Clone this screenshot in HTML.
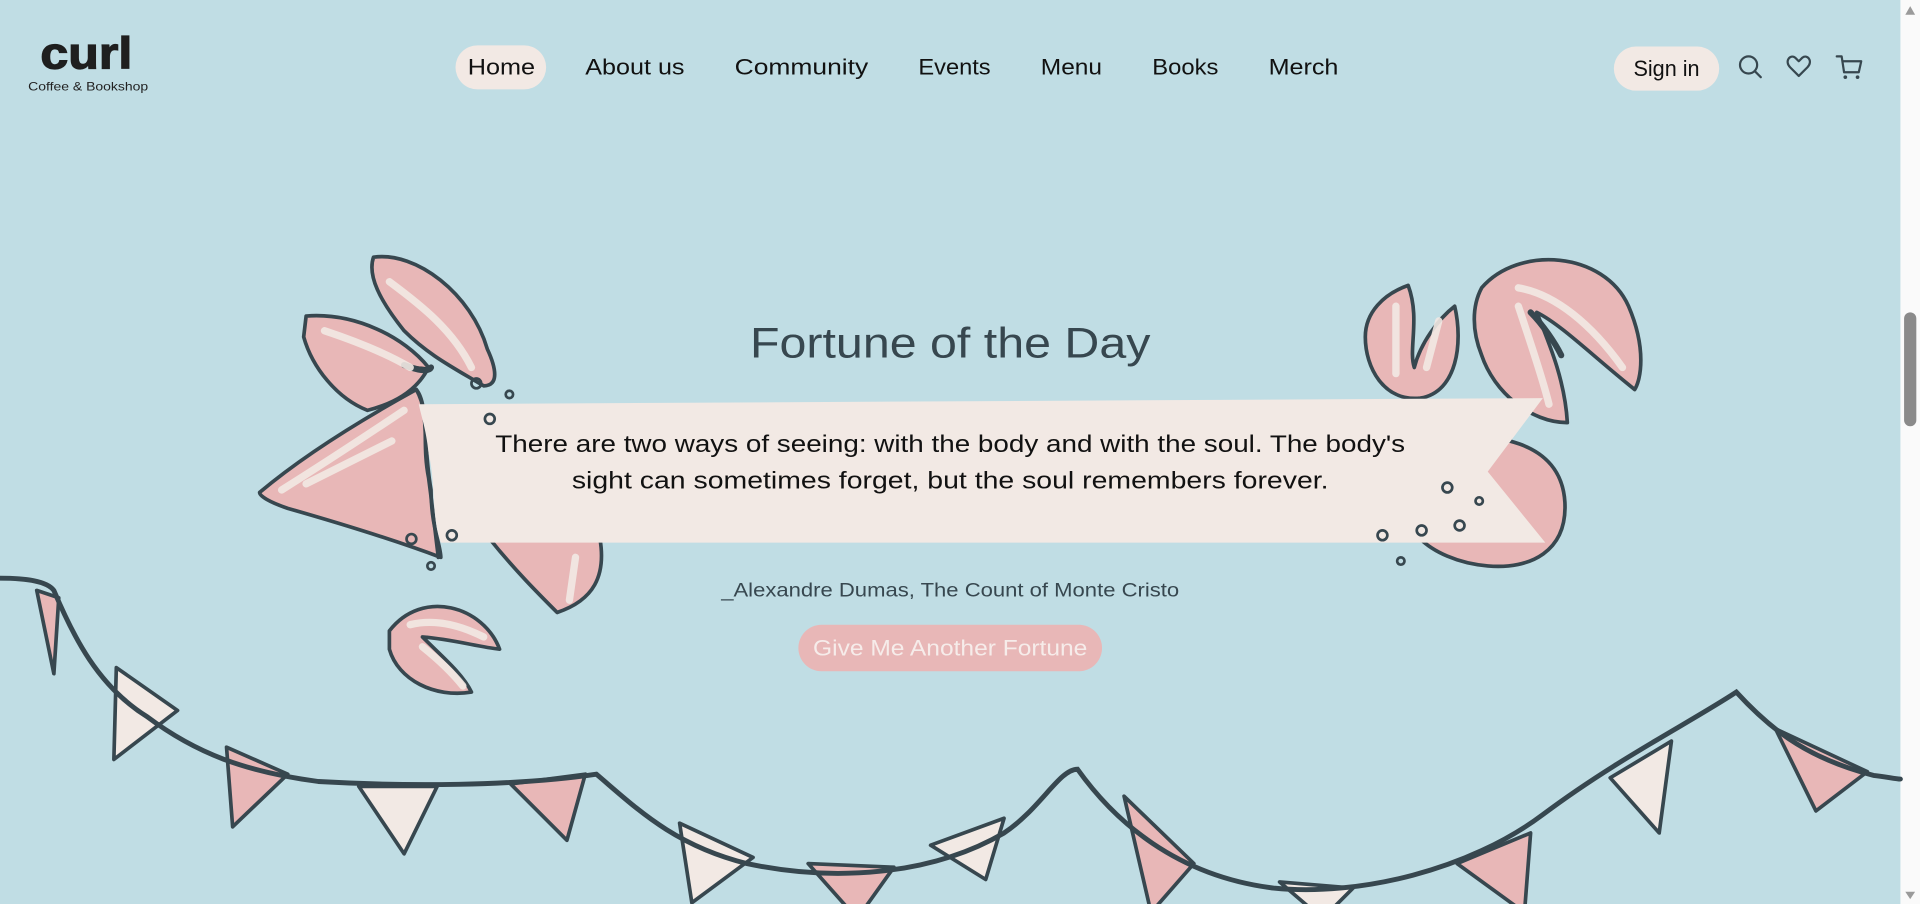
<!DOCTYPE html>
<html><head><meta charset="utf-8"><style>
html,body{margin:0;padding:0;width:1920px;height:904px;overflow:hidden;background:#c0dde4}
svg{display:block}
text{font-family:"Liberation Sans",sans-serif}
</style></head><body>
<svg width="1920" height="904" viewBox="0 0 1568 738" preserveAspectRatio="none">
<rect width="1568" height="738" fill="#c0dde4"/>
<rect x="1552" y="0" width="16" height="738" fill="#fafafa"/>
<rect x="1555" y="255" width="10" height="93" rx="5" fill="#8a8a8a"/>
<path d="M1556 12 L1560 5 L1564 12Z" fill="#9a9a9a"/>
<path d="M1556 728 L1560 734 L1564 728Z" fill="#9a9a9a"/>

<text x="33" y="56" font-size="36" font-weight="bold" fill="#1f1f1f" stroke="#1f1f1f" stroke-width="1" textLength="75" lengthAdjust="spacingAndGlyphs">curl</text>
<text x="23" y="74" font-size="10" fill="#222" textLength="98" lengthAdjust="spacingAndGlyphs">Coffee &amp; Bookshop</text>

<rect x="372" y="37" width="74" height="36" rx="18" fill="#f2e9e4"/>
<g font-size="18" fill="#111">
<text x="382" y="61" textLength="55" lengthAdjust="spacingAndGlyphs">Home</text>
<text x="478" y="61" textLength="81" lengthAdjust="spacingAndGlyphs">About us</text>
<text x="600" y="61" textLength="109" lengthAdjust="spacingAndGlyphs">Community</text>
<text x="750" y="61" textLength="59" lengthAdjust="spacingAndGlyphs">Events</text>
<text x="850" y="61" textLength="50" lengthAdjust="spacingAndGlyphs">Menu</text>
<text x="941" y="61" textLength="54" lengthAdjust="spacingAndGlyphs">Books</text>
<text x="1036" y="61" textLength="57" lengthAdjust="spacingAndGlyphs">Merch</text>
</g>
<rect x="1318" y="38" width="86" height="36" rx="18" fill="#f2e9e4"/>
<text x="1334" y="62" font-size="18" fill="#111" textLength="54" lengthAdjust="spacingAndGlyphs">Sign in</text>
<g fill="none" stroke="#37474f" stroke-width="1.8" stroke-linecap="round" stroke-linejoin="round">
<circle cx="1428" cy="53" r="7"/><path d="M1433 58 L1438 63"/>
<path d="M1469 62 L1462 55 C1457 50 1462 44 1466 47 L1469 50 L1472 47 C1476 44 1481 50 1476 55 Z"/>
<path d="M1500 46 L1504 46 L1506 59 L1518 59 L1520 50 L1505 50"/>
</g>
<circle cx="1507" cy="63" r="1.5" fill="#37474f"/><circle cx="1517" cy="63" r="1.5" fill="#37474f"/>

<g stroke="#37474f" stroke-width="3" stroke-linejoin="round" stroke-linecap="round">
<path d="M305 210 C340 205 385 240 398 285 C405 300 408 315 395 315 C370 300 350 290 330 270 C310 245 300 225 305 210Z" fill="#e8b7b7"/>
<path d="M250 258 C290 255 330 275 350 300 C340 320 320 330 300 335 C275 325 255 300 248 275Z" fill="#e8b7b7"/>
<path d="M330 298 C340 302 350 304 352 300" stroke-width="5"/>
<path d="M400 440 L490 440 C495 470 485 490 455 500 C440 485 420 465 400 440Z" fill="#e8b7b7"/>
<path d="M212 402 C250 370 300 340 340 318 C350 330 345 360 352 400 C352 430 360 445 360 455 C320 440 270 425 235 415 C220 410 212 405 212 402Z" fill="#e8b7b7"/>
<path d="M340 318 C352 340 344 360 350 390 C354 420 356 440 358 455" fill="none" stroke-width="3"/>
<path d="M318 515 C345 480 395 495 408 530 C390 528 370 522 345 520 C360 535 378 550 385 565 C355 570 325 555 318 530Z" fill="#e8b7b7"/>
</g>
<g stroke="#f2e9e4" stroke-width="6" stroke-linecap="round" fill="none" opacity=".9">
<path d="M318 230 C345 250 370 270 385 300"/>
<path d="M265 270 C295 280 318 290 335 300"/>
<path d="M230 400 C270 375 300 355 330 335"/>
<path d="M250 395 C280 380 300 370 320 360"/>
<path d="M470 455 L465 490"/>
<path d="M335 510 C355 505 375 510 395 520"/>
<path d="M345 528 C360 540 370 550 378 560"/>
</g>
<g stroke="#37474f" stroke-width="3" stroke-linejoin="round">
<path d="M1150 233 C1160 260 1150 285 1155 300 C1160 280 1175 260 1188 250 C1195 280 1190 320 1160 325 C1130 328 1115 300 1115 275 C1115 255 1130 240 1150 233Z" fill="#e8b7b7"/>
<path d="M1210 235 C1240 200 1310 205 1330 250 C1345 285 1340 310 1335 318 C1300 290 1275 265 1255 255 C1265 280 1278 310 1280 345 C1250 345 1220 320 1210 290 C1202 270 1202 250 1210 235Z" fill="#e8b7b7"/>
<path d="M1165 360 C1220 350 1275 360 1278 410 C1280 450 1250 465 1215 462 C1190 460 1170 450 1160 440Z" fill="#e8b7b7"/>
</g>
<g stroke="#f2e9e4" stroke-width="6" stroke-linecap="round" fill="none" opacity=".9">
<path d="M1140 250 L1140 305"/><path d="M1175 262 L1165 300"/>
<path d="M1240 235 C1270 240 1300 265 1325 300"/>
<path d="M1240 250 C1250 280 1260 310 1265 330"/>
</g>
<path d="M1250 255 C1260 265 1270 280 1275 290" stroke="#37474f" stroke-width="5" stroke-linecap="round"/>

<path d="M342 330 L1260 325 L1215 385 L1262 443 L360 443 C352 420 356 395 350 370 C348 350 344 340 342 330Z" fill="#f2e9e4"/>
<g fill="none" stroke="#37474f" stroke-width="2.2">
<circle cx="389" cy="313" r="4"/><circle cx="416" cy="322" r="3"/><circle cx="400" cy="342" r="4"/>
<circle cx="336" cy="440" r="4"/><circle cx="369" cy="437" r="4"/><circle cx="352" cy="462" r="3"/>
<circle cx="1182" cy="398" r="4"/><circle cx="1208" cy="409" r="3"/><circle cx="1192" cy="429" r="4"/>
<circle cx="1129" cy="437" r="4"/><circle cx="1161" cy="433" r="4"/><circle cx="1144" cy="458" r="3"/>
</g>

<g stroke="#37474f" stroke-width="3" stroke-linejoin="round">
<path d="M30 482 L48 488 L44 550Z" fill="#e8b7b7"/>
<path d="M95 545 L145 580 L93 620Z" fill="#f2e9e4"/>
<path d="M185 610 L235 632 L190 675Z" fill="#e8b7b7"/>
<path d="M293 642 L357 642 L330 697Z" fill="#f2e9e4"/>
<path d="M417 640 L478 632 L463 686Z" fill="#e8b7b7"/>
<path d="M555 672 L615 700 L565 737Z" fill="#f2e9e4"/>
<path d="M660 705 L730 708 L700 750Z" fill="#e8b7b7"/>
<path d="M760 690 L820 668 L805 718Z" fill="#f2e9e4"/>
<path d="M918 650 L975 705 L940 745Z" fill="#e8b7b7"/>
<path d="M1045 720 L1105 725 L1080 750Z" fill="#f2e9e4"/>
<path d="M1190 705 L1250 680 L1245 745Z" fill="#e8b7b7"/>
<path d="M1315 635 L1365 605 L1355 680Z" fill="#f2e9e4"/>
<path d="M1450 595 L1525 630 L1483 662Z" fill="#e8b7b7"/>
</g>
<path d="M0 472 C20 472 38 474 44 482 C60 520 80 560 120 585 C160 615 200 630 260 638 C330 642 420 642 487 632 C520 660 550 690 610 705 C680 720 760 715 820 680 C850 660 865 628 880 628 C910 670 960 715 1040 725 C1110 732 1200 710 1260 665 C1320 620 1380 590 1418 565 C1450 600 1480 620 1530 633 C1540 634 1548 636 1552 636" fill="none" stroke="#37474f" stroke-width="4" stroke-linecap="round"/>

<text x="776" y="292" text-anchor="middle" font-size="35" fill="#37474f" textLength="327" lengthAdjust="spacingAndGlyphs">Fortune of the Day</text>
<text x="776" y="369" text-anchor="middle" font-size="20" fill="#111" textLength="743" lengthAdjust="spacingAndGlyphs">There are two ways of seeing: with the body and with the soul. The body's</text>
<text x="776" y="399" text-anchor="middle" font-size="20" fill="#111" textLength="618" lengthAdjust="spacingAndGlyphs">sight can sometimes forget, but the soul remembers forever.</text>
<text x="776" y="487" text-anchor="middle" font-size="16" fill="#37474f" textLength="374" lengthAdjust="spacingAndGlyphs">_Alexandre Dumas, The Count of Monte Cristo</text>
<rect x="652" y="510" width="248" height="38" rx="19" fill="#e8b7b7"/>
<text x="776" y="535" text-anchor="middle" font-size="18" fill="#f6ecea" textLength="224" lengthAdjust="spacingAndGlyphs">Give Me Another Fortune</text>
</svg>
</body></html>
